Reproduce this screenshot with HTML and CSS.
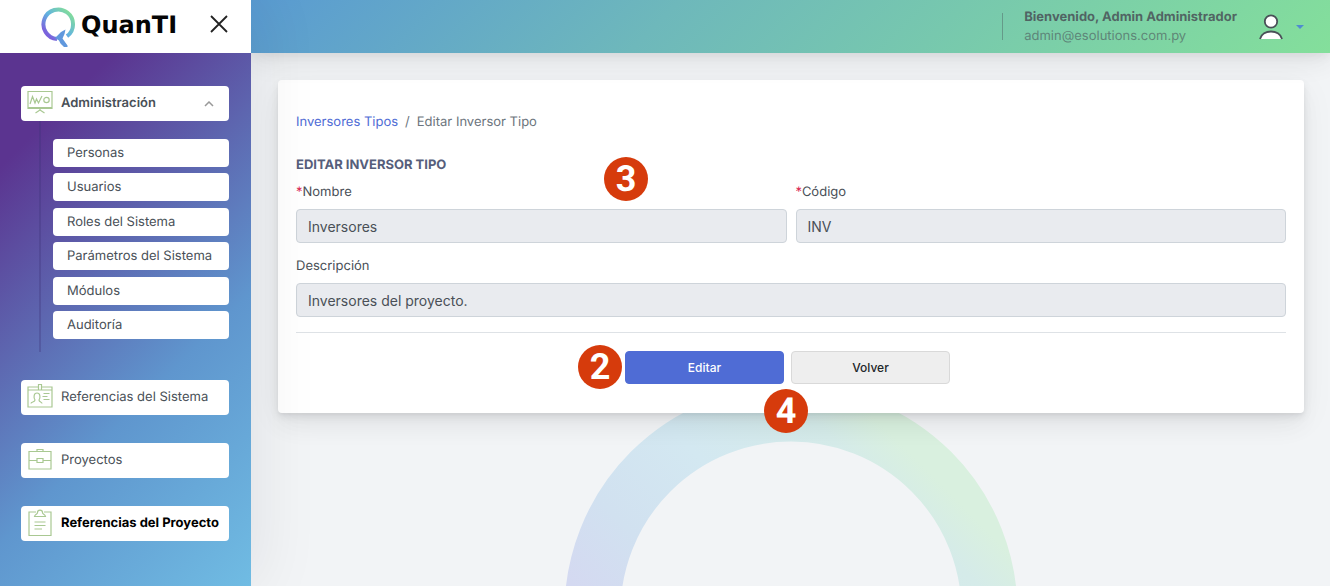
FILE: index.html
```html
<!DOCTYPE html>
<html lang="es">
<head>
<meta charset="utf-8">
<title>QuanTI - Editar Inversor Tipo</title>
<link rel="stylesheet" href="styles.css">
</head>
<body>
<div class="app">
  <aside class="sidebar">
    <div class="brand">
      <a class="logo" href="#">
        <svg class="logo-mark" viewBox="0 0 36 42" width="36" height="42" aria-hidden="true">
          <defs>
            <linearGradient id="q" x1="0" y1="1" x2="1" y2="0">
              <stop offset="0.15" stop-color="#7b62dc"/>
              <stop offset="0.5" stop-color="#62b4e0"/>
              <stop offset="0.9" stop-color="#82dc9c"/>
            </linearGradient>
          </defs>
          <path d="M17 33A14.800 14.800 0 1 1 27 30.200" fill="none" stroke="url(#q)" stroke-width="4"/>
          <path d="M25.500 23.500L21 26L15 32L19 34.500L20.500 37.500L24 41H27.500V39.500L22.500 32.500L24.500 28Z" fill="#6098dd"/>
        </svg>
        <span>QuanTI</span>
      </a>
      <button class="close" type="button" aria-label="Cerrar menú">
        <svg viewBox="0 0 18 18" width="18" height="18"><path d="M1 1L17 17M17 1L1 17" fill="none" stroke="#222" stroke-width="1.800"/></svg>
      </button>
    </div>
    <nav class="menu">
      <div class="group">
        <a class="item open" href="#">
          <svg class="icon" viewBox="0 0 26 28"><path d="M1 2.500H25V19.500H1ZM1 18.500H25M13 19.500V21L8.500 24M13 21L17.500 24M3 15L5.500 7.500L8 14L9.500 10L11.500 14L15 7"/><circle cx="19.500" cy="11" r="2.700"/></svg>
          <span>Administración</span>
          <svg class="chevron" viewBox="0 0 10 6"><path d="M1 5L5 1L9 5"/></svg>
        </a>
        <ul class="submenu">
          <li><a href="#">Personas</a></li>
          <li><a href="#">Usuarios</a></li>
          <li><a href="#">Roles del Sistema</a></li>
          <li><a href="#">Parámetros del Sistema</a></li>
          <li><a href="#">Módulos</a></li>
          <li><a href="#">Auditoría</a></li>
        </ul>
      </div>
      <a class="item" href="#">
        <svg class="icon" viewBox="0 0 26 28"><path d="M11.500 4H1V24H25V4H14.500M1 7H11.500M14.500 7H25M11.500 1.500H14.500V7H11.500ZM4 20.500C4 18.500 8 19.500 8 17C6.500 15 6.500 10 10 10S13.500 15 12 17C12 19.500 15 18.500 15 20.500M16.500 10.500H22.500M15.500 13.500H20.500M16.500 16.500H22.500"/></svg>
        <span>Referencias del Sistema</span>
      </a>
      <a class="item" href="#">
        <svg class="icon" viewBox="0 0 26 28"><path d="M2 5.500H24V23H2ZM10 5.500V3.500H16V5.500M2 14.500H10M16 14.500H24M10 12.500H16V16.500H10Z"/></svg>
        <span>Proyectos</span>
      </a>
      <a class="item active" href="#">
        <svg class="icon" viewBox="0 0 26 28"><path d="M9 3H2V26.500H24V3H17M7.500 7.500C8 5 10.500 5.500 10.500 3.500C10.500 .3 15.500 .3 15.500 3.500C15.500 5.500 18 5 18.500 7.500ZM7.500 13H18.500M7.500 16.500H18.500M7.500 20H15"/></svg>
        <span>Referencias del Proyecto</span>
      </a>
    </nav>
  </aside>
  <div class="page">
    <header class="topbar">
      <div class="user">
        <strong>Bienvenido, Admin Administrador</strong>
        <span>admin@esolutions.com.py</span>
      </div>
      <button class="account" type="button" aria-label="Cuenta">
        <svg viewBox="0 0 24 26" width="24" height="26"><circle cx="12" cy="7.500" r="6.200" fill="#fff" stroke="#495057" stroke-width="1.800"/><path d="M1 25C3.500 15 20.500 15 23 25" fill="#fff" stroke="#495057" stroke-width="1.800"/></svg>
        <svg viewBox="0 0 8 4" width="8" height="4"><path d="M0 0H8L4 4Z" fill="#4f8bd0"/></svg>
      </button>
    </header>
    <main class="content">
      <svg class="ring" viewBox="0 0 454 454" aria-hidden="true">
        <defs>
          <linearGradient id="r" x1="0" y1="1" x2="1" y2="0">
            <stop offset="0.260" stop-color="#d4d9f1"/>
            <stop offset="0.400" stop-color="#d1e1f0"/>
            <stop offset="0.580" stop-color="#d3e8f1"/>
            <stop offset="0.770" stop-color="#d5ebe9"/>
            <stop offset="0.850" stop-color="#d9f0df"/>
          </linearGradient>
        </defs>
        <circle cx="227" cy="227" r="198.500" fill="none" stroke="url(#r)" stroke-width="56"/>
      </svg>
      <section class="card">
        <nav class="crumbs" aria-label="Ruta">
          <a href="#">Inversores Tipos</a><span>/</span><span>Editar Inversor Tipo</span>
        </nav>
        <form class="form">
          <h1>Editar Inversor Tipo</h1>
          <div class="row">
            <div class="field">
              <label for="nombre"><em>*</em>Nombre</label>
              <input id="nombre" type="text" value="Inversores" disabled>
            </div>
            <div class="field">
              <label for="codigo"><em>*</em>Código</label>
              <input id="codigo" type="text" value="INV" disabled>
            </div>
          </div>
          <div class="field">
            <label for="descripcion">Descripción</label>
            <input id="descripcion" type="text" value="Inversores del proyecto." disabled>
          </div>
          <div class="actions">
            <button class="btn primary" type="button">Editar</button>
            <button class="btn" type="button">Volver</button>
            <b class="step step-two">2</b>
            <b class="step step-three">3</b>
            <b class="step step-four">4</b>
          </div>
        </form>
      </section>
    </main>
  </div>
</div>
</body>
</html>
```

FILE: styles.css
```css
* { box-sizing: border-box; }

body {
  margin: 0;
  font: 13px/20px Inter, "Liberation Sans", sans-serif;
  text-rendering: geometricPrecision;
  color: #495057;
  background: #f2f4f6;
}

a { color: inherit; text-decoration: none; }
button { font: inherit; cursor: pointer; }

.app {
  display: grid;
  grid-template-columns: 251px 1fr;
  min-height: 100vh;
}

/* Sidebar */
.sidebar {
  position: relative;
  z-index: 2;
  display: flex;
  flex-direction: column;
  background: linear-gradient(135deg, #5b3490 20%, #5f96ce 65%, #70bce3 100%);
  box-shadow: 7px 0 60px rgba(8, 10, 37, 0.08);
}

.brand {
  display: flex;
  align-items: center;
  justify-content: space-between;
  height: 53px;
  padding: 0 23px 0 40px;
  background: #fff;
}

.logo {
  display: flex;
  align-items: center;
  gap: 5px;
  font: bold 24px/42px "DejaVu Sans", sans-serif;
  color: #050505;
}

.logo span { padding-bottom: 4px; }

.close {
  display: flex;
  padding: 0 0 5px;
  border: 0;
  background: none;
}

.menu {
  display: flex;
  flex-direction: column;
  gap: 28px;
  padding: 33px 22px 33px 21px;
}

.item {
  display: flex;
  align-items: center;
  gap: 8px;
  height: 35px;
  padding: 0 15px 2px 6px;
  border-radius: 4px;
  background: #fff;
  white-space: nowrap;
}

.item.open { font-weight: 600; }
.item.active { font-weight: 700; color: #000; padding-right: 0; }

.icon {
  flex: none;
  width: 26px;
  height: 28px;
  fill: none;
  stroke: #a9c892;
  stroke-width: 1.2;
}

.chevron {
  width: 10px;
  height: 6px;
  margin: 2px 0 0 auto;
  fill: none;
  stroke: #999;
  stroke-width: 1.5;
}

.submenu {
  display: flex;
  flex-direction: column;
  justify-content: space-between;
  height: 231px;
  margin: 0 0 0 18px;
  padding: 18px 0 13px 12px;
  border-left: 2px solid rgba(60, 50, 120, 0.3);
  list-style: none;
}

.submenu a {
  display: block;
  padding: 4px 14px;
  border-radius: 4px;
  background: #fff;
}

/* Top bar */
.page {
  display: flex;
  flex-direction: column;
  min-width: 0;
}

.topbar {
  position: relative;
  z-index: 1;
  display: flex;
  align-items: center;
  justify-content: flex-end;
  gap: 22px;
  height: 53px;
  padding: 0 26px;
  background: linear-gradient(135deg, #5a9bd2, #6eb8bb 38%, #84df9b);
  box-shadow: 0 6px 35px rgba(4, 9, 20, 0.05), 0 12px 22px rgba(4, 9, 20, 0.03), 0 4px 9px rgba(4, 9, 20, 0.05);
}

.user {
  display: grid;
  align-content: center;
  height: 27px;
  padding-left: 21px;
  border-left: 1px solid rgba(73, 80, 87, 0.4);
  line-height: 19px;
  color: rgba(73, 80, 87, 0.6);
}

.user strong { color: rgba(73, 80, 87, 0.85); }

.account {
  display: flex;
  align-items: center;
  gap: 13px;
  padding: 0;
  border: 0;
  background: none;
}

/* Content */
.content {
  position: relative;
  flex: 1;
  padding: 27px 26px 27px 27px;
  overflow: hidden;
}

.ring {
  position: absolute;
  top: 332px;
  left: 50%;
  width: 454px;
  transform: translateX(-50%);
}

.card {
  position: relative;
  padding: 32px 18px 29px;
  border-radius: 4px;
  background: #fff;
  box-shadow: 0 8px 35px rgba(4, 9, 20, 0.05), 0 15px 22px rgba(4, 9, 20, 0.03), 0 4px 9px rgba(4, 9, 20, 0.08), 0 2px 3px rgba(4, 9, 20, 0.03);
}

.crumbs {
  display: flex;
  gap: 7px;
  color: #6c757d;
}

.crumbs a { color: #4f6cd5; }

.form { padding-top: 23px; }

h1 {
  margin: 0 0 7px;
  font-size: 13px;
  line-height: 20px;
  text-transform: uppercase;
  color: #565e7b;
}

.row {
  display: grid;
  grid-template-columns: 1fr 1fr;
  gap: 9px;
  margin-bottom: 13px;
}

.field {
  display: grid;
  gap: 7px;
}

.field em { font-style: normal; color: #d92550; }

.field input {
  width: 100%;
  height: 34px;
  padding: 0 11px;
  border: 1px solid #ced4da;
  border-radius: 4px;
  background: #e9ebef;
  font: 14px/20px Inter, "Liberation Sans", sans-serif;
  color: #495057;
}

.actions {
  position: relative;
  display: flex;
  justify-content: center;
  gap: 7px;
  margin-top: 15px;
  padding: 18px 7px 0 0;
  border-top: 1px solid #dee2e6;
}

.btn {
  width: 159px;
  height: 33px;
  border: 1px solid #d9d9d9;
  border-radius: 4px;
  background: #eee;
  font-size: 12px;
  font-weight: 500;
  color: #212529;
}

.btn.primary {
  border-color: #4f6cd5;
  background: #4f6cd5;
  color: #fff;
}

/* Numbered markers laid over the form */
.step {
  position: absolute;
  left: 50%;
  width: 44px;
  height: 44px;
  border-radius: 50%;
  background: #d63b0c;
  font: 700 36px/45px Roboto, sans-serif;
  text-align: center;
  color: #fff;
}

.step-two { top: 12px; margin-left: -213px; }
.step-three { top: -176px; margin-left: -187px; }
.step-four { top: 56px; margin-left: -27px; }
```
